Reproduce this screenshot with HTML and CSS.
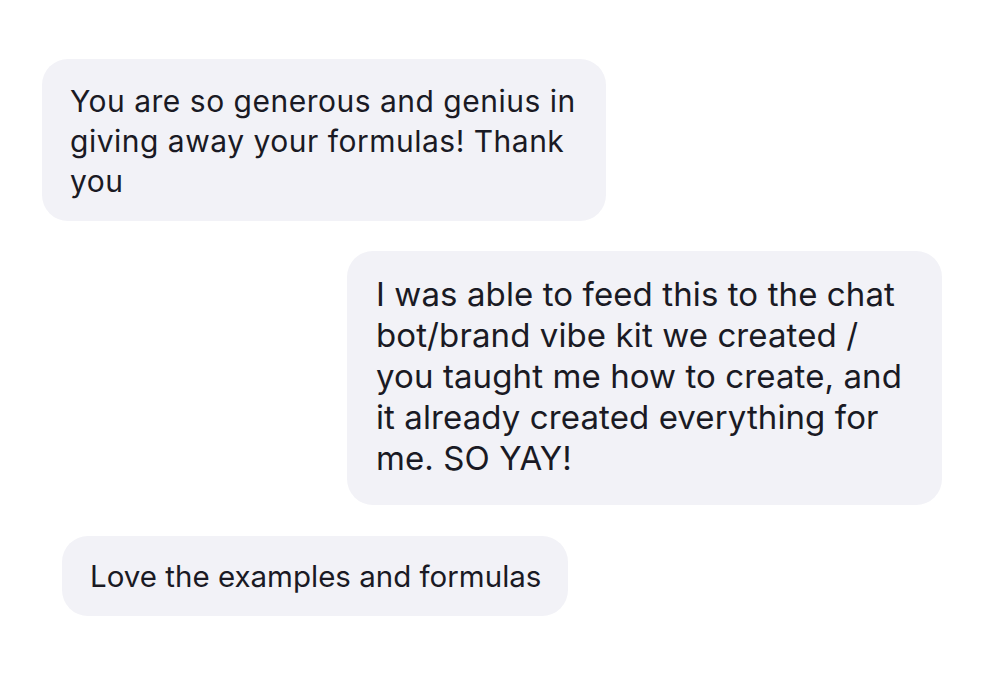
FILE: index.html
```html
<!DOCTYPE html>
<html lang="en">
<head>
<meta charset="utf-8">
<title>Messages</title>
<link rel="stylesheet" href="styles.css">
</head>
<body>
<main class="thread">
  <div class="bubble b1">You are so generous and genius in<br>giving away your formulas! Thank<br>you</div>
  <div class="bubble b2">I was able to feed this to the chat<br>bot/brand vibe kit we created /<br>you taught me how to create, and<br>it already created everything for<br>me. SO YAY!</div>
  <div class="bubble b3">Love the examples and formulas</div>
</main>
</body>
</html>
```

FILE: styles.css
```css
html, body {
  margin: 0;
  padding: 0;
  background: #ffffff;
}

.thread {
  width: 1000px;
  height: 700px;
  box-sizing: border-box;
  padding: 59px 58px 0 42px;
  display: flex;
  flex-direction: column;
  font-family: "Inter", "Liberation Sans", sans-serif;
  color: #1a1a24;
}

.bubble {
  background: #f2f2f7;
  border-radius: 26px;
  box-sizing: border-box;
  white-space: nowrap;
}

.b1 {
  align-self: flex-start;
  width: 564px;
  font-size: 30px;
  line-height: 40px;
  letter-spacing: 0.5px;
  padding: 22px 20px 20px 28px;
}

.b2 {
  align-self: flex-end;
  width: 595px;
  margin-top: 30px;
  font-size: 33px;
  line-height: 41px;
  letter-spacing: 0.1px;
  padding: 23px 20px 26px 29px;
}

.b3 {
  align-self: flex-start;
  margin-top: 31px;
  margin-left: 20px;
  font-size: 29.5px;
  line-height: 40px;
  letter-spacing: 0;
  padding: 20px 27px 20px 28px;
}
```
